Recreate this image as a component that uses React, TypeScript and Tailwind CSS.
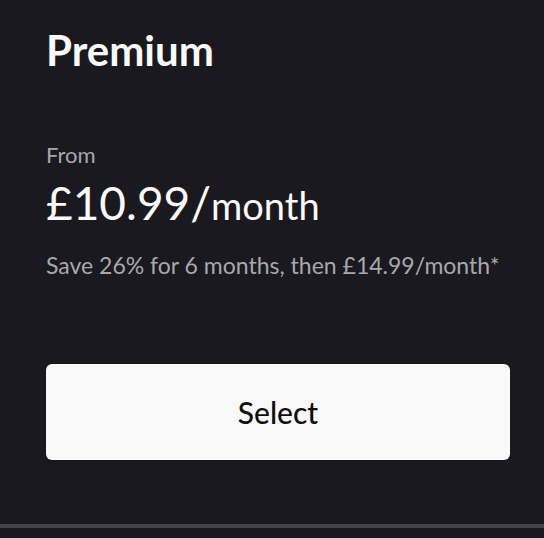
export default function App() {
  return (
    <div className="w-[544px] h-[538px] bg-[#1a191f] flex flex-col font-['Lato',sans-serif] overflow-hidden">
      <div className="flex flex-col pl-[46px] pr-[34px] pt-[26px] flex-1">
        <h2 className="text-[42px] leading-[48px] font-bold text-[#f9f9f9]">Premium</h2>
        <p className="mt-[67px] text-[22px] leading-[28px] text-[#a8a8ad]">From</p>
        <p className="mt-[8px] text-[#f9f9f9] text-[46px] leading-[52px]">
          £10.99/<span className="text-[38px]">month</span>
        </p>
        <p className="mt-[19px] text-[23px] leading-[30px] text-[#a8a8ad]">
          Save 26% for 6 months, then £14.99/month*
        </p>
        <button className="mt-[84px] h-[96px] w-full rounded-[6px] bg-[#f9f9f9] text-[30px] font-medium text-[#0e0e10]">
          Select
        </button>
      </div>
      <div className="h-[4px] bg-[#45434e] mb-[10px]" />
    </div>
  );
}
